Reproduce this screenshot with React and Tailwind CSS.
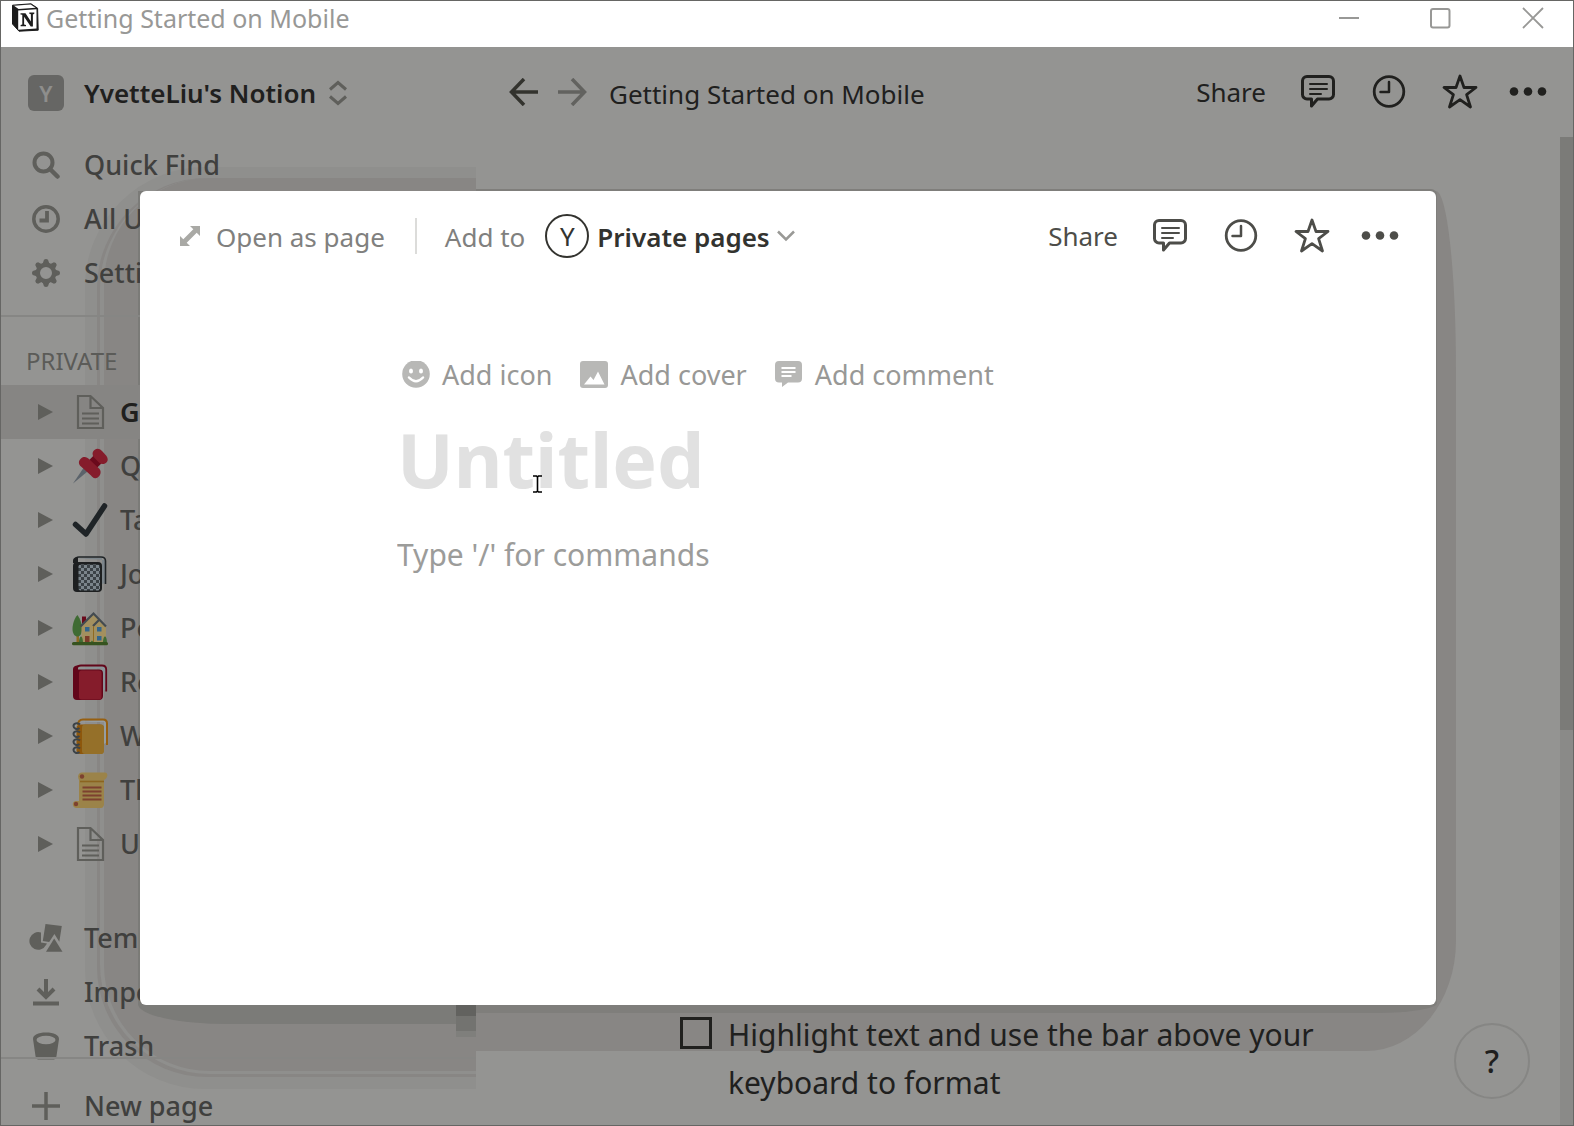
import React from "react";

function NotionLogo() {
  return (
    <svg width="28" height="29" viewBox="0 0 28 29" aria-hidden="true">
      <path d="M1.500 2.200 20 .8l6.600 4.400.6 22L8 28.200 1.500 21Z" fill="#1c1c1c" stroke="#1c1c1c" strokeWidth="1" strokeLinejoin="round" />
      <path d="M3 2.800 19.600 1.600l5 3.200L7.600 5.900Z" fill="#fff" />
      <path d="M7.200 7.400 25.500 6.300V25.600L7.200 26.800Z" fill="#fff" />
      <path d="M9.500 10.300h5l5.400 8.100v-7.100l-1.600-.5v-1.200h5v1.200l-1.400.6v12h-2.200l-6.600-9.600v7.600l1.900.6v1.200H9.600V22l1.700-.6v-9.600l-1.800-.3Z" fill="#1c1c1c" />
    </svg>
  );
}

function CommentIcon() {
  return (
    <svg width="36" height="36" viewBox="0 0 36 36" fill="none" stroke="currentColor" aria-hidden="true">
      <path d="M7 2.500h22a4.500 4.500 0 0 1 4.500 4.500v13.500a4.500 4.500 0 0 1-4.500 4.500H17.500L11.500 32v-7H7a4.500 4.500 0 0 1-4.500-4.500V7A4.500 4.500 0 0 1 7 2.500Z" strokeWidth="3" strokeLinejoin="round" />
      <path d="M10 10h17M10 15h17M10 20h11" strokeWidth="2" strokeLinecap="round" />
    </svg>
  );
}

function ClockIcon() {
  return (
    <svg width="34" height="34" viewBox="0 0 34 34" fill="none" stroke="currentColor" aria-hidden="true">
      <circle cx="17" cy="16.500" r="14.800" strokeWidth="2.800" />
      <path d="M17 7v10H8.500" strokeWidth="2.500" strokeLinecap="round" strokeLinejoin="round" />
    </svg>
  );
}

function StarIcon() {
  return (
    <svg width="36" height="36" viewBox="0 0 36 36" fill="none" stroke="currentColor" aria-hidden="true">
      <path d="M18 2 22 13.500H34L24.600 20.700 28.500 33 18 25.700 7.500 33 11.400 20.700 2 13.500H14Z" strokeWidth="2.800" strokeLinejoin="round" />
    </svg>
  );
}

function DotsIcon() {
  return (
    <svg width="38" height="12" viewBox="0 0 38 12" fill="currentColor" aria-hidden="true">
      <circle cx="5" cy="5.500" r="4.300" />
      <circle cx="19" cy="5.500" r="4.300" />
      <circle cx="33" cy="5.500" r="4.300" />
    </svg>
  );
}

function PageActions() {
  return (
    <div className="flex items-center">
      <button className="text-[26px] leading-9">Share</button>
      <button className="ml-[34px]" aria-label="Comments"><CommentIcon /></button>
      <button className="ml-9" aria-label="Updates"><ClockIcon /></button>
      <button className="ml-9" aria-label="Favorite"><StarIcon /></button>
      <button className="ml-[31px]" aria-label="More"><DotsIcon /></button>
    </div>
  );
}

function SearchIcon() {
  return (
    <svg width="28" height="28" viewBox="0 0 28 28" fill="none" stroke="currentColor" aria-hidden="true">
      <circle cx="11.500" cy="11.500" r="9" strokeWidth="4" />
      <path d="m18 18 7.500 7.500" strokeWidth="4.500" strokeLinecap="round" />
    </svg>
  );
}

function UpdatesIcon() {
  return (
    <svg width="28" height="28" viewBox="0 0 28 28" fill="none" stroke="currentColor" aria-hidden="true">
      <circle cx="14" cy="14" r="12.200" strokeWidth="3.500" />
      <path d="M15 6v9.500H7.500" strokeWidth="3.800" />
    </svg>
  );
}

function GearIcon() {
  return (
    <svg width="28" height="28" viewBox="0 0 28 28" aria-hidden="true">
      <g fill="currentColor">
        {[0, 45, 90, 135].map((a) => (
          <path key={a} d="M12 .8Q14-.8 16 .8L17.800 6h-7.600ZM12 27.200Q14 28.800 16 27.200L17.800 22h-7.600Z" transform={`rotate(${a} 14 14)`} />
        ))}
      </g>
      <circle cx="14" cy="14" r="8.200" fill="none" stroke="currentColor" strokeWidth="4.400" />
    </svg>
  );
}

function TemplatesIcon() {
  return (
    <svg width="34" height="28" viewBox="0 0 34 28" fill="currentColor" aria-hidden="true">
      <path d="M12 8.600A8.800 8.800 0 1 0 17 21l1-1.600-6-.9Z" />
      <path d="m16.500 0 16.300 2-2.500 15.800L25.400 10l-5.200 8-6.400-1Z" />
      <path d="m25.200 14.500 8.300 13.200H17Z" />
    </svg>
  );
}

function ImportIcon() {
  return (
    <svg width="28" height="28" viewBox="0 0 28 28" fill="none" stroke="currentColor" strokeWidth="4" aria-hidden="true">
      <path d="M14 1v17M6 11l8 8 8-8M1 25.500h26" />
    </svg>
  );
}

function TrashIcon() {
  return (
    <svg width="28" height="28" viewBox="0 0 28 28" aria-hidden="true">
      <path d="M1 7C1 3 6 .5 14 .5S27 3 27 7l-2.500 17c-.4 2.800-1.500 3.600-4 3.600h-13c-2.500 0-3.600-.8-4-3.600Z" fill="currentColor" />
      <ellipse cx="14" cy="8" rx="9.500" ry="4.200" fill="#949492" />
    </svg>
  );
}

function PlusIcon() {
  return (
    <svg width="28" height="28" viewBox="0 0 28 28" fill="none" stroke="currentColor" strokeWidth="3.500" aria-hidden="true">
      <path d="M14 0v28M0 14h28" />
    </svg>
  );
}

function DocIcon() {
  return (
    <svg width="36" height="36" viewBox="0 0 36 36" fill="none" stroke="#5f5f5b" strokeWidth="2.200" aria-hidden="true">
      <path d="M6 2h12.500L31 14v20H6ZM18.500 2v12H31M10 19.500h17M10 24.500h17M10 29.500h17" />
    </svg>
  );
}

function PinEmoji() {
  return (
    <svg width="36" height="36" viewBox="0 0 36 36" aria-hidden="true">
      <path d="M1 35.500 11.500 20l4 3.500Z" fill="#5b636b" />
      <rect x="12.500" y="9.500" width="19" height="11" fill="#6a0a1c" transform="rotate(-45 22 15)" />
      <path d="M9 10.500c3-2.500 6-1.500 8.500 1l10 9.500c2.500 3 .5 8-3 9-3 .7-4-.8-5.500-2.500L9 18.500c-2.500-2-3-5.500 0-8Z" fill="#851c2b" />
      <path d="M22.500 2c3-2.500 6-.8 8 1.500L34.500 8c2 3 1.500 6-1.500 7.500-3 1.300-5 0-6.500-1.500L22 9.500c-2-2.500-2-5.500.5-7.500Z" fill="#851c2b" />
    </svg>
  );
}

function CheckEmoji() {
  return (
    <svg width="36" height="36" viewBox="0 0 36 36" aria-hidden="true">
      <path d="M3.500 22.500 14 32 32.500 4" fill="none" stroke="#1f2427" strokeWidth="5.500" strokeLinecap="round" strokeLinejoin="round" />
    </svg>
  );
}

function BookEmoji({ spine, cover, back }) {
  return (
    <svg width="36" height="36" viewBox="0 0 36 36" aria-hidden="true">
      <path d="M5 4.500h25v22l4-1V6l-3-4Z" fill="#8a9399" />
      <path d="M5 31V4.500C5 2 7 1.500 9 1.500h21c3 0 4.200 1.500 4.200 4v22" fill="none" stroke={back} strokeWidth="1.800" />
      <path d="M1 6c0-3.500 2-4.500 5-4.500V5.500h21c2.500 0 4 1 4 3.500v23c0 2.500-1.500 4-4 4H5c-2.500 0-4-1.500-4-4Z" fill={spine} />
      <rect x="7" y="6.500" width="22.500" height="29" rx="2.500" fill={cover} />
    </svg>
  );
}

function JournalEmoji() {
  return (
    <svg width="36" height="36" viewBox="0 0 36 36" aria-hidden="true">
      <defs>
        <pattern id="marble" width="6" height="6" patternUnits="userSpaceOnUse">
          <rect width="6" height="6" fill="#7b858b" />
          <path d="M0 0h3v3H0ZM3 3h3v3H3Z" fill="#3b4246" />
        </pattern>
      </defs>
      <path d="M4 2h26v26l3-1V4Z" fill="#7c858b" />
      <path d="M3 5c0-3 2-4 4-4h22c3 0 4.500 1.500 4.500 4v23" fill="none" stroke="#1f2427" strokeWidth="1.600" />
      <rect x="1" y="6" width="29" height="30" rx="4" fill="#1d1f20" />
      <path d="M1 5C1 2 3 1 6 1v6H1Z" fill="#1d1f20" />
      <rect x="6.500" y="8.500" width="21.500" height="26" rx="2" fill="url(#marble)" />
    </svg>
  );
}

function HouseEmoji() {
  return (
    <svg width="36" height="36" viewBox="0 0 36 36" aria-hidden="true">
      <path d="M4.500 24h2.500v9H4.500Z" fill="#8f6a21" />
      <path d="M5.500 5C8.500 9 10 14 10 19s-2 7.500-4.500 7.500S.5 24 .5 19 2.500 8 5.500 5Z" fill="#3f6b33" />
      <path d="M10 6.500h4v7h-4Z" fill="#6a0a1c" />
      <path d="M9.500 16 21 4l13 13v16H9.500Z" fill="#a3905f" />
      <path d="m8.500 16.500 13-13 12.500 13M21 16l6-6" fill="none" stroke="#444b50" strokeWidth="2.200" />
      <path d="M21.500 16v17" stroke="#8f6a21" strokeWidth="1" />
      <path d="M13 17h4.500v4.500H13ZM25 17h4.500v4.500H25ZM25 26h4.500v4.500H25Z" fill="#33658c" />
      <path d="M13 26h4.500v7H13Z" fill="#7b3b29" />
      <path d="M7 33c0-4 1-6.500 2-6.500s2 2.500 2 6.500ZM31 33c0-4 1-6.500 2-6.500s2 2.500 2 6.500ZM18.500 33q1.500-5 3 0Z" fill="#3f6b33" />
      <rect x="0" y="32" width="36" height="3.200" rx="1.500" fill="#36531f" />
    </svg>
  );
}

function NotebookEmoji() {
  return (
    <svg width="36" height="36" viewBox="0 0 36 36" aria-hidden="true">
      <path d="M6 4h26v22l3-2V5l-3-3Z" fill="#959da2" />
      <path d="M6 7c0-4 2-5.500 5-5.500h20c3 0 4 1.500 4 4V27" fill="none" stroke="#965f10" strokeWidth="2" />
      <rect x="4.500" y="6.500" width="27" height="29.500" rx="3.500" fill="#8d570c" />
      <rect x="10" y="6.500" width="22" height="29.500" rx="3" fill="#957029" />
      {[8, 16, 24, 32].map((y) => (
        <path key={y} d={`M8 ${y - 1.5}c-2.500-2.500-6.500-1-6.500 1.500s3.500 4 6 2`} fill="none" stroke="#3b4247" strokeWidth="2" />
      ))}
    </svg>
  );
}

function ScrollEmoji() {
  return (
    <svg width="36" height="36" viewBox="0 0 36 36" aria-hidden="true">
      <path d="M10 .5h23c3 0 3.500 5-1 7.500v24c0 2-1 4-3 4H4c-4 0-4.500-7 0-7h3V8C5 4 6.500.5 10 .5Z" fill="#9b8349" />
      <path d="M8 9.500h24" stroke="#8b6420" strokeWidth="1.600" />
      <circle cx="10" cy="4.500" r="2.200" fill="#7d412f" />
      <circle cx="4" cy="32" r="2.200" fill="#7d412f" />
      <path d="M10.500 15.500h19M10.500 19.500h19M10.500 23.500h19M10.500 27.500h19" stroke="#7d412f" strokeWidth="2" />
    </svg>
  );
}

const pages = [
  { label: "Getting Started on Mobile", icon: <DocIcon />, selected: true },
  { label: "Quick Note", icon: <PinEmoji /> },
  { label: "Task List", icon: <CheckEmoji /> },
  { label: "Journal", icon: <JournalEmoji /> },
  { label: "Personal Home", icon: <HouseEmoji /> },
  { label: "Reading List", icon: <BookEmoji spine="#62061a" cover="#851c2b" back="#62061a" /> },
  { label: "Weekly Agenda", icon: <NotebookEmoji /> },
  { label: "Thoughts", icon: <ScrollEmoji /> },
  { label: "Untitled", icon: <DocIcon /> },
];

function NavItem({ icon, label }) {
  return (
    <button className="flex h-[54px] w-full shrink-0 items-center pl-[27px] text-left text-[27px] font-medium text-[#40403e]">
      <span className="flex w-9 shrink-0 justify-center text-[#5f5f5b]">{icon}</span>
      <span className="ml-5">{label}</span>
    </button>
  );
}

function PageItem({ icon, label, selected }) {
  return (
    <li className={selected ? "bg-[#868583]" : ""}>
      <button className="flex h-[54px] w-full items-center pl-9 text-left text-[27px]">
        <svg width="16" height="18" viewBox="0 0 16 18" fill="#5f5f5b" aria-hidden="true">
          <path d="M1 1v16l15-8Z" />
        </svg>
        <span className="ml-[19px] w-9 shrink-0">{icon}</span>
        <span className={selected ? "ml-3 truncate font-semibold text-[#20201e]" : "ml-3 font-medium text-[#40403e]"}>{label}</span>
      </button>
    </li>
  );
}

function Sidebar() {
  return (
    <aside className="relative flex w-[475px] shrink-0 flex-col">
      <button className="mt-[19px] flex h-[54px] shrink-0 items-center pl-[27px]">
        <span className="flex size-9 items-center justify-center rounded-md bg-[#666664] text-[22px] font-semibold text-[#8e8e8c]">Y</span>
        <span className="ml-5 text-[26px] font-semibold text-[#20201e]">YvetteLiu's Notion</span>
        <svg className="ml-3" width="20" height="26" viewBox="0 0 20 26" fill="none" stroke="#5f5f5b" strokeWidth="3" aria-hidden="true">
          <path d="m2 9.500 8-7 8 7M2 16.500l8 7 8-7" />
        </svg>
      </button>
      <nav className="mt-[18px] flex flex-col">
        <NavItem icon={<SearchIcon />} label="Quick Find" />
        <NavItem icon={<UpdatesIcon />} label="All Updates" />
        <NavItem icon={<GearIcon />} label="Settings & Members" />
      </nav>
      <div className="mt-[15px] shrink-0 border-t-2 border-[#868684]" />
      <h2 className="mt-6 h-11 shrink-0 pl-[25px] text-2xl leading-10 text-[#5b5b58]">PRIVATE</h2>
      <ul>
        {pages.map((p, i) => (
          <PageItem key={i} {...p} />
        ))}
      </ul>
      <div className="mt-10 flex h-[146px] shrink-0 flex-col">
        <NavItem icon={<TemplatesIcon />} label="Templates" />
        <NavItem icon={<ImportIcon />} label="Import" />
        <NavItem icon={<TrashIcon />} label="Trash" />
      </div>
      <div className="shrink-0 border-t-2 border-[#868684]" />
      <button className="mt-[22px] flex shrink-0 items-center pl-[31px] text-[27px] leading-[50px] font-medium text-[#40403e]">
        <span className="text-[#5f5f5b]"><PlusIcon /></span>
        <span className="ml-6">New page</span>
      </button>
    </aside>
  );
}

function DialogShadow() {
  return (
    <div className="pointer-events-none absolute inset-0" aria-hidden="true">
      <div className="absolute inset-y-0 left-0 w-[475px] overflow-hidden">
        <div className="absolute top-[120px] bottom-[36px] left-[84px] -right-60 rounded-[120px] bg-[#8f8f8d]" />
        <div className="absolute top-[131px] bottom-[48px] left-[96px] -right-60 rounded-[110px] bg-[#888684]" />
        <div className="absolute top-[131px] bottom-[51px] left-[99px] -right-60 rounded-[110px] bg-[#8f8f8d]" />
        <div className="absolute top-[131px] bottom-[54px] left-[103px] -right-60 rounded-[106px] bg-[#888684]" />
        <div className="absolute top-[144px] bottom-[101px] left-[137px] -right-60 rounded-bl-[90px_20px] bg-[#7b7b78]" />
        <div className="absolute right-0 bottom-[88px] h-14 w-5 bg-[#7f7f7c]" />
        <div className="absolute right-0 bottom-[94px] h-14 w-5 bg-[#737370]" />
        <div className="absolute right-0 bottom-[109px] h-14 w-5 bg-[#62625f]" />
      </div>
      <div className="absolute inset-y-0 right-0 left-[475px] overflow-hidden">
        <div className="absolute top-[144px] right-[117px] bottom-[74px] -left-60 rounded-tr-[20px_180px] rounded-br-[90px_110px] bg-[#888684]" />
        <div className="absolute top-[142px] right-[136px] bottom-[112px] -left-60 rounded-tr-md rounded-br-[60px_10px] bg-[#7f7e7b]" />
      </div>
    </div>
  );
}

function PageView() {
  return (
    <main className="relative flex min-w-0 flex-1 flex-col justify-between">
      <header className="flex h-[90px] items-center pr-[26px] pl-[33px] text-[#20201e]">
        <button aria-label="Back" className="text-[#33332e]">
          <svg width="29" height="28" viewBox="0 0 29 28" fill="none" stroke="currentColor" strokeWidth="3.500" aria-hidden="true">
            <path d="M15 1 2.500 14 15 27M2.500 14H29" />
          </svg>
        </button>
        <button aria-label="Forward" className="ml-5 text-[#62625f]">
          <svg width="29" height="28" viewBox="0 0 29 28" fill="none" stroke="currentColor" strokeWidth="3.500" aria-hidden="true">
            <path d="m14 1 12.500 13L14 27M26.500 14H0" />
          </svg>
        </button>
        <span className="mt-1 ml-[22px] flex-1 text-[26px] whitespace-nowrap">Getting Started on Mobile</span>
        <PageActions />
      </header>
      <div className="flex items-start pb-[18px] pl-[204px]">
        <input id="highlight" type="checkbox" className="mt-1.5 size-8 shrink-0 appearance-none border-3 border-[#20201e]" />
        <label htmlFor="highlight" className="ml-4 w-[620px] text-[30px] leading-[48px] text-[#20201e]">
          Highlight text and use the bar above your keyboard to format
        </label>
      </div>
      <div className="absolute top-[90px] right-0 bottom-0 w-[13px] bg-[#8a8a88]">
        <div className="h-[60%] bg-[#7b7b78]" />
      </div>
      <button aria-label="Help" className="absolute right-[43px] bottom-[26px] size-[76px] rounded-full border-2 border-[#868684] text-[32px] font-medium text-[#20201e]">?</button>
    </main>
  );
}

function PageDialog() {
  return (
    <div className="absolute inset-0 flex pt-[144px] pr-[137px] pb-[120px] pl-[139px]">
      <section role="dialog" aria-label="New page" className="flex min-w-0 flex-1 flex-col rounded-md bg-white">
        <header className="flex h-[90px] items-center justify-between pr-[37px] pl-10 text-[26px] text-[#33332f]">
          <div className="flex items-center">
            <button className="flex items-center text-[#80807e]">
              <svg width="20" height="20" viewBox="0 0 20 20" fill="#a9a9a5" aria-hidden="true">
                <path d="M10 0h10v10l-3.300-3.300-10 10L10 20H0V10l3.300 3.300 10-10Z" />
              </svg>
              <span className="mt-0.5 ml-4">Open as page</span>
            </button>
            <div className="ml-[30px] h-9 border-l-2 border-[#dcdcda]" />
            <span className="mt-0.5 ml-7 text-[#80807e]">Add to</span>
            <button className="ml-5 flex items-center">
              <span className="flex size-11 items-center justify-center rounded-full border-2 border-[#33332f]">Y</span>
              <span className="mt-0.5 ml-2 font-semibold">Private pages</span>
              <svg className="ml-1.5" width="20" height="12" viewBox="0 0 20 12" fill="none" stroke="#999996" strokeWidth="2.500" aria-hidden="true">
                <path d="m2 1.500 8 8 8-8" />
              </svg>
            </button>
          </div>
          <div className="text-[#4d4d49]">
            <PageActions />
          </div>
        </header>
        <div className="pl-[257px]">
          <div className="mt-[72px] flex h-11 items-center text-[27px] text-[#989896]">
            <button className="flex items-center pl-[5px]">
              <svg width="28" height="28" viewBox="0 0 28 28" aria-hidden="true">
                <circle cx="14" cy="13" r="13.800" fill="#b8b8b6" />
                <ellipse cx="9" cy="10" rx="2" ry="2.500" fill="#fff" />
                <ellipse cx="19" cy="10" rx="2" ry="2.500" fill="#fff" />
                <path d="M7 16.500q7 7.500 14 0" fill="none" stroke="#fff" strokeWidth="2.500" strokeLinecap="round" />
              </svg>
              <span className="ml-3">Add icon</span>
            </button>
            <button className="ml-7 flex items-center">
              <svg width="28" height="28" viewBox="0 0 28 28" aria-hidden="true">
                <rect width="28" height="27" rx="3" fill="#b8b8b6" />
                <path d="m4 23.500 6.500-8 3 3.500L18 10.500l6.500 13Z" fill="#fff" />
              </svg>
              <span className="ml-3">Add cover</span>
            </button>
            <button className="ml-7 flex items-center">
              <svg width="28" height="28" viewBox="0 0 28 28" aria-hidden="true">
                <path d="M4 0h19a4 4 0 0 1 4 4v13.500a4 4 0 0 1-4 4H13L7 26v-4.500H4a4 4 0 0 1-4-4V4a4 4 0 0 1 4-4Z" fill="#b8b8b6" />
                <path d="M6.500 7h14M6.500 11h14M6.500 15h10" stroke="#fff" strokeWidth="1.800" />
              </svg>
              <span className="ml-3">Add comment</span>
            </button>
          </div>
          <input aria-label="Page title" placeholder="Untitled" className="mt-2 block h-[108px] w-full text-[75px] font-bold outline-none placeholder:text-[#e1e1e1]" />
          <input aria-label="Page content" placeholder="Type '/' for commands" className="mt-[17px] block h-12 w-full text-[30px] outline-none placeholder:text-[#9c9c9a]" />
        </div>
      </section>
      <svg className="pointer-events-none absolute top-[428px] left-[531px]" width="11" height="18" viewBox="0 0 11 18" fill="none" stroke="#000" strokeWidth="1.600" aria-hidden="true">
        <path d="M1 1h3.500l1 1 1-1H10M5.500 2v14M1 17h3.500l1-1 1 1H10" />
      </svg>
    </div>
  );
}

export default function App() {
  return (
    <div className="flex h-screen flex-col border border-[#666664] bg-white font-['Noto_Sans',sans-serif]">
      <div className="flex h-[46px] shrink-0 items-start justify-between pr-[29px] pl-[10px]">
        <div className="flex items-start text-[#989896]">
          <div className="mt-[2px]"><NotionLogo /></div>
          <span className="ml-[7px] text-[25px] leading-[34px]">Getting Started on Mobile</span>
        </div>
        <div className="flex items-center gap-[70px] pt-1.5 text-[#989896]">
          <button aria-label="Minimize">
            <svg width="22" height="22" viewBox="0 0 22 22" fill="none" stroke="currentColor" strokeWidth="2"><path d="M1 11h20" /></svg>
          </button>
          <button aria-label="Maximize">
            <svg width="22" height="22" viewBox="0 0 22 22" fill="none" stroke="currentColor" strokeWidth="2"><rect x="1" y="2" width="18.500" height="18.500" rx="2" /></svg>
          </button>
          <button aria-label="Close">
            <svg width="22" height="22" viewBox="0 0 22 22" fill="none" stroke="currentColor" strokeWidth="1.800"><path d="m1 1 20 20M21 1 1 21" /></svg>
          </button>
        </div>
      </div>
      <div className="relative min-h-0 flex-1 overflow-hidden bg-[#949492]">
        <DialogShadow />
        <div className="relative flex h-full">
          <Sidebar />
          <PageView />
        </div>
        <PageDialog />
      </div>
    </div>
  );
}
